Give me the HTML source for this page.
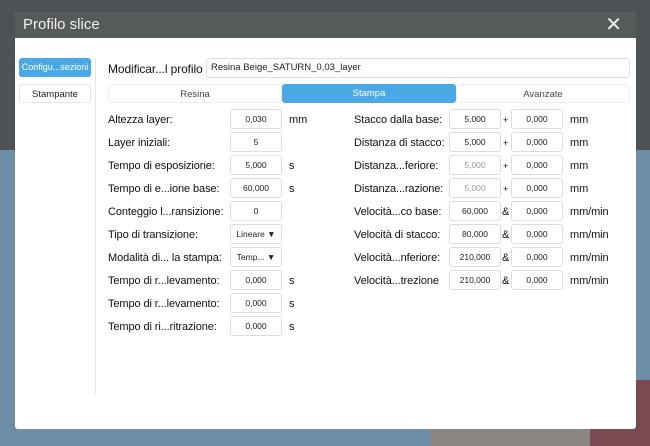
<!DOCTYPE html><html><head><meta charset="utf-8"><style>
*{box-sizing:border-box;margin:0;padding:0}
body{width:650px;height:446px;overflow:hidden;position:relative;font-family:"Liberation Sans",sans-serif;background:#4e5254}
.bgb{position:absolute;left:0;top:150px;width:650px;height:296px;background:#6e8ea8}
.bgb2{position:absolute;left:430px;top:400px;width:160px;height:46px;background:#8a8684}
.bgb3{position:absolute;left:590px;top:380px;width:60px;height:66px;background:#7a4a52}
.dlg{position:absolute;left:15px;top:12px;width:621px;height:417px;background:#fff;border-radius:3px;overflow:hidden}
.tb{height:26px;background:#575a5b;color:#f0f0f0;font-size:15px;line-height:26px;padding-left:8px}
.x{position:absolute;right:14px;top:4px;color:#eee;font-size:20px;line-height:18px}
.a{position:absolute;font-size:11px;color:#111;white-space:nowrap;letter-spacing:-0.1px;margin-top:2px}
.i{position:absolute;height:20px;border:1px solid #ddd;border-radius:3px;font-size:8.5px;text-align:center;line-height:18px;color:#222;background:#fff}
.btn{position:absolute;border-radius:3px;font-size:9.5px;text-align:center;line-height:19px}
</style></head><body>
<div class="bgb"></div><div class="bgb2"></div><div class="bgb3"></div>
<div class="dlg">
<div class="tb">Profilo slice</div><div class="x">✕</div>
</div>
<div class="btn" style="left:19px;top:58px;width:72px;height:19px;background:#4ba8e6;color:#fff;font-size:9px">Configu...sezioni</div>
<div class="btn" style="left:19px;top:84px;width:72px;height:19px;border:1px solid #e4e4e4;color:#222">Stampante</div>
<div style="position:absolute;left:95px;top:58px;width:1px;height:336px;background:#e6e6e6"></div>
<div class="a" style="left:108px;top:60px;font-size:12px">Modificar...l profilo</div>
<div class="i" style="left:206px;top:58px;width:424px;text-align:left;padding-left:4px;font-size:9.5px">Resina Beige_SATURN_0,03_layer</div>
<div class="btn" style="left:108px;top:84px;width:174px;height:19px;border:1px solid #eee;color:#444">Resina</div>
<div class="btn" style="left:282px;top:84px;width:174px;height:19px;background:#4ba8e6;color:#fff">Stampa</div>
<div class="btn" style="left:456px;top:84px;width:174px;height:19px;border:1px solid #eee;color:#444">Avanzate</div>

<div class="a" style="left:108px;top:112px">Altezza layer:</div><div class="i" style="left:230px;top:109px;width:52px">0,030</div><div class="a" style="left:289px;top:112px">mm</div>
<div class="a" style="left:108px;top:135px">Layer iniziali:</div><div class="i" style="left:230px;top:132px;width:52px">5</div>
<div class="a" style="left:108px;top:158px">Tempo di esposizione:</div><div class="i" style="left:230px;top:155px;width:52px">5,000</div><div class="a" style="left:289px;top:158px">s</div>
<div class="a" style="left:108px;top:181px">Tempo di e...ione base:</div><div class="i" style="left:230px;top:178px;width:52px">60,000</div><div class="a" style="left:289px;top:181px">s</div>
<div class="a" style="left:108px;top:204px">Conteggio l...ransizione:</div><div class="i" style="left:230px;top:201px;width:52px">0</div>
<div class="a" style="left:108px;top:227px">Tipo di transizione:</div><div class="i" style="left:230px;top:224px;width:52px">Lineare ▼</div>
<div class="a" style="left:108px;top:250px">Modalità di... la stampa:</div><div class="i" style="left:230px;top:247px;width:52px">Temp... ▼</div>
<div class="a" style="left:108px;top:273px">Tempo di r...levamento:</div><div class="i" style="left:230px;top:270px;width:52px">0,000</div><div class="a" style="left:289px;top:273px">s</div>
<div class="a" style="left:108px;top:296px">Tempo di r...levamento:</div><div class="i" style="left:230px;top:293px;width:52px">0,000</div><div class="a" style="left:289px;top:296px">s</div>
<div class="a" style="left:108px;top:319px">Tempo di ri...ritrazione:</div><div class="i" style="left:230px;top:316px;width:52px">0,000</div><div class="a" style="left:289px;top:319px">s</div>

<div class="a" style="left:354px;top:112px">Stacco dalla base:</div><div class="i" style="left:449px;top:109px;width:52px">5,000</div><div class="a" style="left:503px;top:113px;font-size:9px">+</div><div class="i" style="left:511px;top:109px;width:52px">0,000</div><div class="a" style="left:570px;top:112px">mm</div>
<div class="a" style="left:354px;top:135px">Distanza di stacco:</div><div class="i" style="left:449px;top:132px;width:52px">5,000</div><div class="a" style="left:503px;top:136px;font-size:9px">+</div><div class="i" style="left:511px;top:132px;width:52px">0,000</div><div class="a" style="left:570px;top:135px">mm</div>
<div class="a" style="left:354px;top:158px">Distanza...feriore:</div><div class="i" style="left:449px;top:155px;width:52px;color:#999">5,000</div><div class="a" style="left:503px;top:159px;font-size:9px">+</div><div class="i" style="left:511px;top:155px;width:52px">0,000</div><div class="a" style="left:570px;top:158px">mm</div>
<div class="a" style="left:354px;top:181px">Distanza...razione:</div><div class="i" style="left:449px;top:178px;width:52px;color:#999">5,000</div><div class="a" style="left:503px;top:182px;font-size:9px">+</div><div class="i" style="left:511px;top:178px;width:52px">0,000</div><div class="a" style="left:570px;top:181px">mm</div>
<div class="a" style="left:354px;top:204px">Velocità...co base:</div><div class="i" style="left:449px;top:201px;width:52px">60,000</div><div class="a" style="left:502px;top:204px">&amp;</div><div class="i" style="left:511px;top:201px;width:52px">0,000</div><div class="a" style="left:570px;top:204px">mm/min</div>
<div class="a" style="left:354px;top:227px">Velocità di stacco:</div><div class="i" style="left:449px;top:224px;width:52px">80,000</div><div class="a" style="left:502px;top:227px">&amp;</div><div class="i" style="left:511px;top:224px;width:52px">0,000</div><div class="a" style="left:570px;top:227px">mm/min</div>
<div class="a" style="left:354px;top:250px">Velocità...nferiore:</div><div class="i" style="left:449px;top:247px;width:52px">210,000</div><div class="a" style="left:502px;top:250px">&amp;</div><div class="i" style="left:511px;top:247px;width:52px">0,000</div><div class="a" style="left:570px;top:250px">mm/min</div>
<div class="a" style="left:354px;top:273px">Velocità...trezione</div><div class="i" style="left:449px;top:270px;width:52px">210,000</div><div class="a" style="left:502px;top:273px">&amp;</div><div class="i" style="left:511px;top:270px;width:52px">0,000</div><div class="a" style="left:570px;top:273px">mm/min</div>
</body></html>
